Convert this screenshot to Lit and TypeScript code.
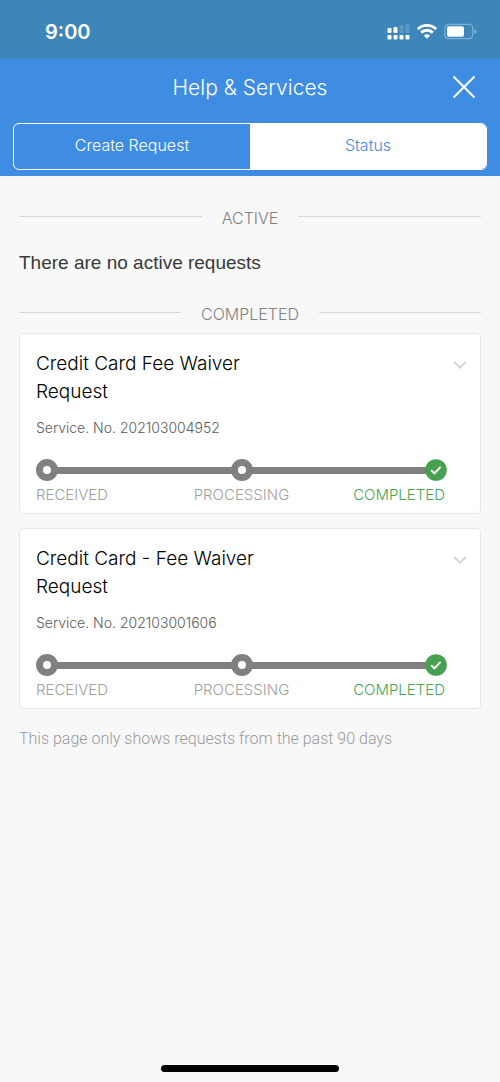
import { LitElement, html, css } from "lit";
import { customElement, property, state } from "lit/decorators.js";

interface ServiceRequest {
  title: string;
  serviceNo: string;
}

const completedRequests: ServiceRequest[] = [
  { title: "Credit Card Fee Waiver Request", serviceNo: "202103004952" },
  { title: "Credit Card - Fee Waiver Request", serviceNo: "202103001606" },
];

@customElement("status-bar")
class StatusBar extends LitElement {
  static styles = css`
    :host {
      display: flex;
      align-items: center;
      justify-content: space-between;
      box-sizing: border-box;
      height: 59px;
      padding: 4px 23px 0 45px;
      background: #3d86b9;
      color: #fff;
    }
    .time {
      font-size: 20px;
      line-height: 24px;
      font-weight: 600;
    }
    .icons {
      display: flex;
      align-items: center;
      gap: 7px;
    }
    svg {
      display: block;
    }
  `;

  render() {
    return html`
      <span class="time">9:00</span>
      <div class="icons">
        <svg width="23" height="17" viewBox="0 0 23 17" fill="#fff" aria-label="Signal">
          <rect x="0.5" y="5" width="4" height="5" rx="1" />
          <rect x="6.5" y="4" width="4" height="6" rx="1" />
          <rect x="12.5" y="2" width="4" height="8" rx="1" opacity="0.15" />
          <rect x="18.5" y="0.5" width="4" height="9.5" rx="1" opacity="0.15" />
          <rect x="0.5" y="12" width="4" height="4.5" rx="1" />
          <rect x="6.5" y="12" width="4" height="4.5" rx="1" />
          <rect x="12.5" y="12" width="4" height="4.5" rx="1" />
          <rect x="18.5" y="12" width="4" height="4.5" rx="1" />
        </svg>
        <svg width="20" height="17" viewBox="0 0 20 17" aria-label="Wi-Fi">
          <g fill="none" stroke="#fff" stroke-width="2.9">
            <path d="M0.9 6.1 A13 13 0 0 1 19.1 6.1" />
            <path d="M4.2 9.6 A8.3 8.3 0 0 1 15.8 9.6" />
          </g>
          <path d="M10 15.8 L6.8 12.5 A4.6 4.6 0 0 1 13.2 12.5 Z" fill="#fff" />
        </svg>
        <svg width="33" height="17" viewBox="0 0 33 17" aria-label="Battery">
          <rect x="0.8" y="1.3" width="28" height="14.4" rx="4" fill="none" stroke="#fff" stroke-opacity="0.35" stroke-width="1.2" />
          <rect x="3" y="3.3" width="17" height="10.4" rx="2" fill="#fff" />
          <path d="M30.5 6 Q32.3 7 32.3 8.5 Q32.3 10 30.5 11 Z" fill="#fff" opacity="0.45" />
        </svg>
      </div>
    `;
  }
}

@customElement("request-card")
class RequestCard extends LitElement {
  @property() heading = "";
  @property() serviceNo = "";

  static styles = css`
    :host {
      display: block;
      padding: 16px 33px 8px 16px;
      background: #fff;
      border: 1px solid #e8e8e8;
      border-radius: 4px;
    }
    .top {
      display: flex;
      align-items: flex-start;
      justify-content: space-between;
      margin-right: -27px;
    }
    .title {
      margin: 0;
      max-width: 240px;
      font-size: 19px;
      line-height: 28px;
      font-weight: 300;
      color: #000;
    }
    .toggle {
      padding: 10px 7px;
      border: 0;
      background: none;
    }
    svg {
      display: block;
    }
    .number {
      margin: 12px 0 21px;
      font-size: 14px;
      line-height: 20px;
      color: #5c5c5c;
    }
    .track {
      display: flex;
      align-items: center;
    }
    .bar {
      flex: 1;
      height: 7px;
      background: #808080;
    }
    .dot {
      box-sizing: border-box;
      width: 22px;
      height: 22px;
      margin: 0 -1px;
      border: 7px solid #808080;
      border-radius: 50%;
      background: #fff;
    }
    .dot:first-child {
      margin-left: 0;
    }
    .done {
      margin-left: -1px;
    }
    .labels {
      display: grid;
      grid-template-columns: 1fr auto 1fr;
      margin-top: 4px;
      font-size: 15px;
      line-height: 20px;
      color: #a0a0a0;
    }
    .complete {
      padding-right: 2px;
      text-align: right;
      color: #46a654;
    }
  `;

  render() {
    return html`
      <div class="top">
        <h3 class="title">${this.heading}</h3>
        <button class="toggle" aria-label="Show details">
          <svg width="14" height="10" viewBox="0 0 14 10" fill="none" stroke="#d6d6d6" stroke-width="2">
            <path d="M1 1.8 L7 7.7 L13 1.8" />
          </svg>
        </button>
      </div>
      <div class="number">Service. No. ${this.serviceNo}</div>
      <div class="track">
        <span class="dot"></span>
        <span class="bar"></span>
        <span class="dot"></span>
        <span class="bar"></span>
        <svg class="done" width="22" height="22" viewBox="0 0 22 22">
          <circle cx="11" cy="11" r="10.8" fill="#46a050" />
          <path d="M6.2 11.3 L9.4 14.3 L15.6 7.8" fill="none" stroke="#fff" stroke-width="1.9" />
        </svg>
      </div>
      <div class="labels">
        <span>RECEIVED</span>
        <span>PROCESSING</span>
        <span class="complete">COMPLETED</span>
      </div>
    `;
  }
}

@customElement("app-root")
class AppRoot extends LitElement {
  @state() private tab = "status";

  static styles = css`
    :host {
      display: flex;
      flex-direction: column;
      min-height: 100vh;
      background: #f8f8f8;
      font-family: Inter, "Liberation Sans", sans-serif;
      font-weight: 300;
    }
    .header {
      padding: 0 13px 6px;
      background: #3f8de3;
      color: #fff;
    }
    .titlebar {
      display: grid;
      grid-template-columns: 46px 1fr 46px;
      align-items: center;
      height: 64px;
      box-sizing: border-box;
      padding-bottom: 6px;
    }
    .heading {
      grid-column: 2;
      margin: 0;
      font-size: 21px;
      line-height: 28px;
      font-weight: 300;
      text-align: center;
    }
    .close {
      padding: 9px 11px 11px;
      border: 0;
      background: none;
    }
    .close svg {
      display: block;
    }
    .tabs {
      display: grid;
      grid-template-columns: 1fr 1fr;
      border: 1px solid #fff;
      border-radius: 6px;
      overflow: hidden;
    }
    .tab {
      height: 45px;
      padding: 0 0 3px;
      border: 0;
      background: none;
      color: #fff;
      font: inherit;
      font-size: 16px;
    }
    .selected {
      background: #fff;
      color: #3f8de3;
    }
    .content {
      flex: 1;
      padding: 30px 19px 0;
    }
    .divider {
      display: flex;
      gap: 20px;
      align-items: center;
      margin: 0;
      font-size: 16px;
      line-height: 24px;
      font-weight: 300;
      color: #808080;
    }
    .divider::before,
    .divider::after {
      content: "";
      flex: 1;
      height: 1px;
      margin-bottom: 3px;
      background: #d9d9d9;
    }
    .empty {
      margin: 19px 0 25px;
      font-family: "Liberation Sans", Arial, sans-serif;
      font-size: 19px;
      line-height: 28px;
      font-weight: 400;
      color: #383838;
    }
    .list {
      display: grid;
      gap: 14px;
      margin-top: 7px;
    }
    .note {
      margin: 18px 0;
      font-family: Roboto, "Liberation Sans", sans-serif;
      font-size: 16px;
      line-height: 24px;
      color: #999;
    }
    .home {
      width: 178px;
      height: 7px;
      margin: 0 auto 10px;
      border-radius: 4px;
      background: #000;
    }
  `;

  private renderTab(id: string, label: string) {
    const active = this.tab === id;
    return html`
      <button class="tab ${active ? "selected" : ""}" role="tab" aria-selected=${active} @click=${() => (this.tab = id)}>${label}</button>
    `;
  }

  render() {
    return html`
      <status-bar></status-bar>
      <header class="header">
        <div class="titlebar">
          <h1 class="heading">Help &amp; Services</h1>
          <button class="close" aria-label="Close">
            <svg width="24" height="24" viewBox="0 0 24 24" stroke="#fff" stroke-width="2">
              <path d="M1.5 1.5 L22.5 22.5 M22.5 1.5 L1.5 22.5" />
            </svg>
          </button>
        </div>
        <div class="tabs" role="tablist">
          ${this.renderTab("create", "Create Request")}
          ${this.renderTab("status", "Status")}
        </div>
      </header>
      <main class="content">
        <h2 class="divider">ACTIVE</h2>
        <p class="empty">There are no active requests</p>
        <h2 class="divider">COMPLETED</h2>
        <div class="list">
          ${completedRequests.map(
            (r) => html`<request-card .heading=${r.title} .serviceNo=${r.serviceNo}></request-card>`
          )}
        </div>
        <p class="note">This page only shows requests from the past 90 days</p>
      </main>
      <div class="home"></div>
    `;
  }
}
